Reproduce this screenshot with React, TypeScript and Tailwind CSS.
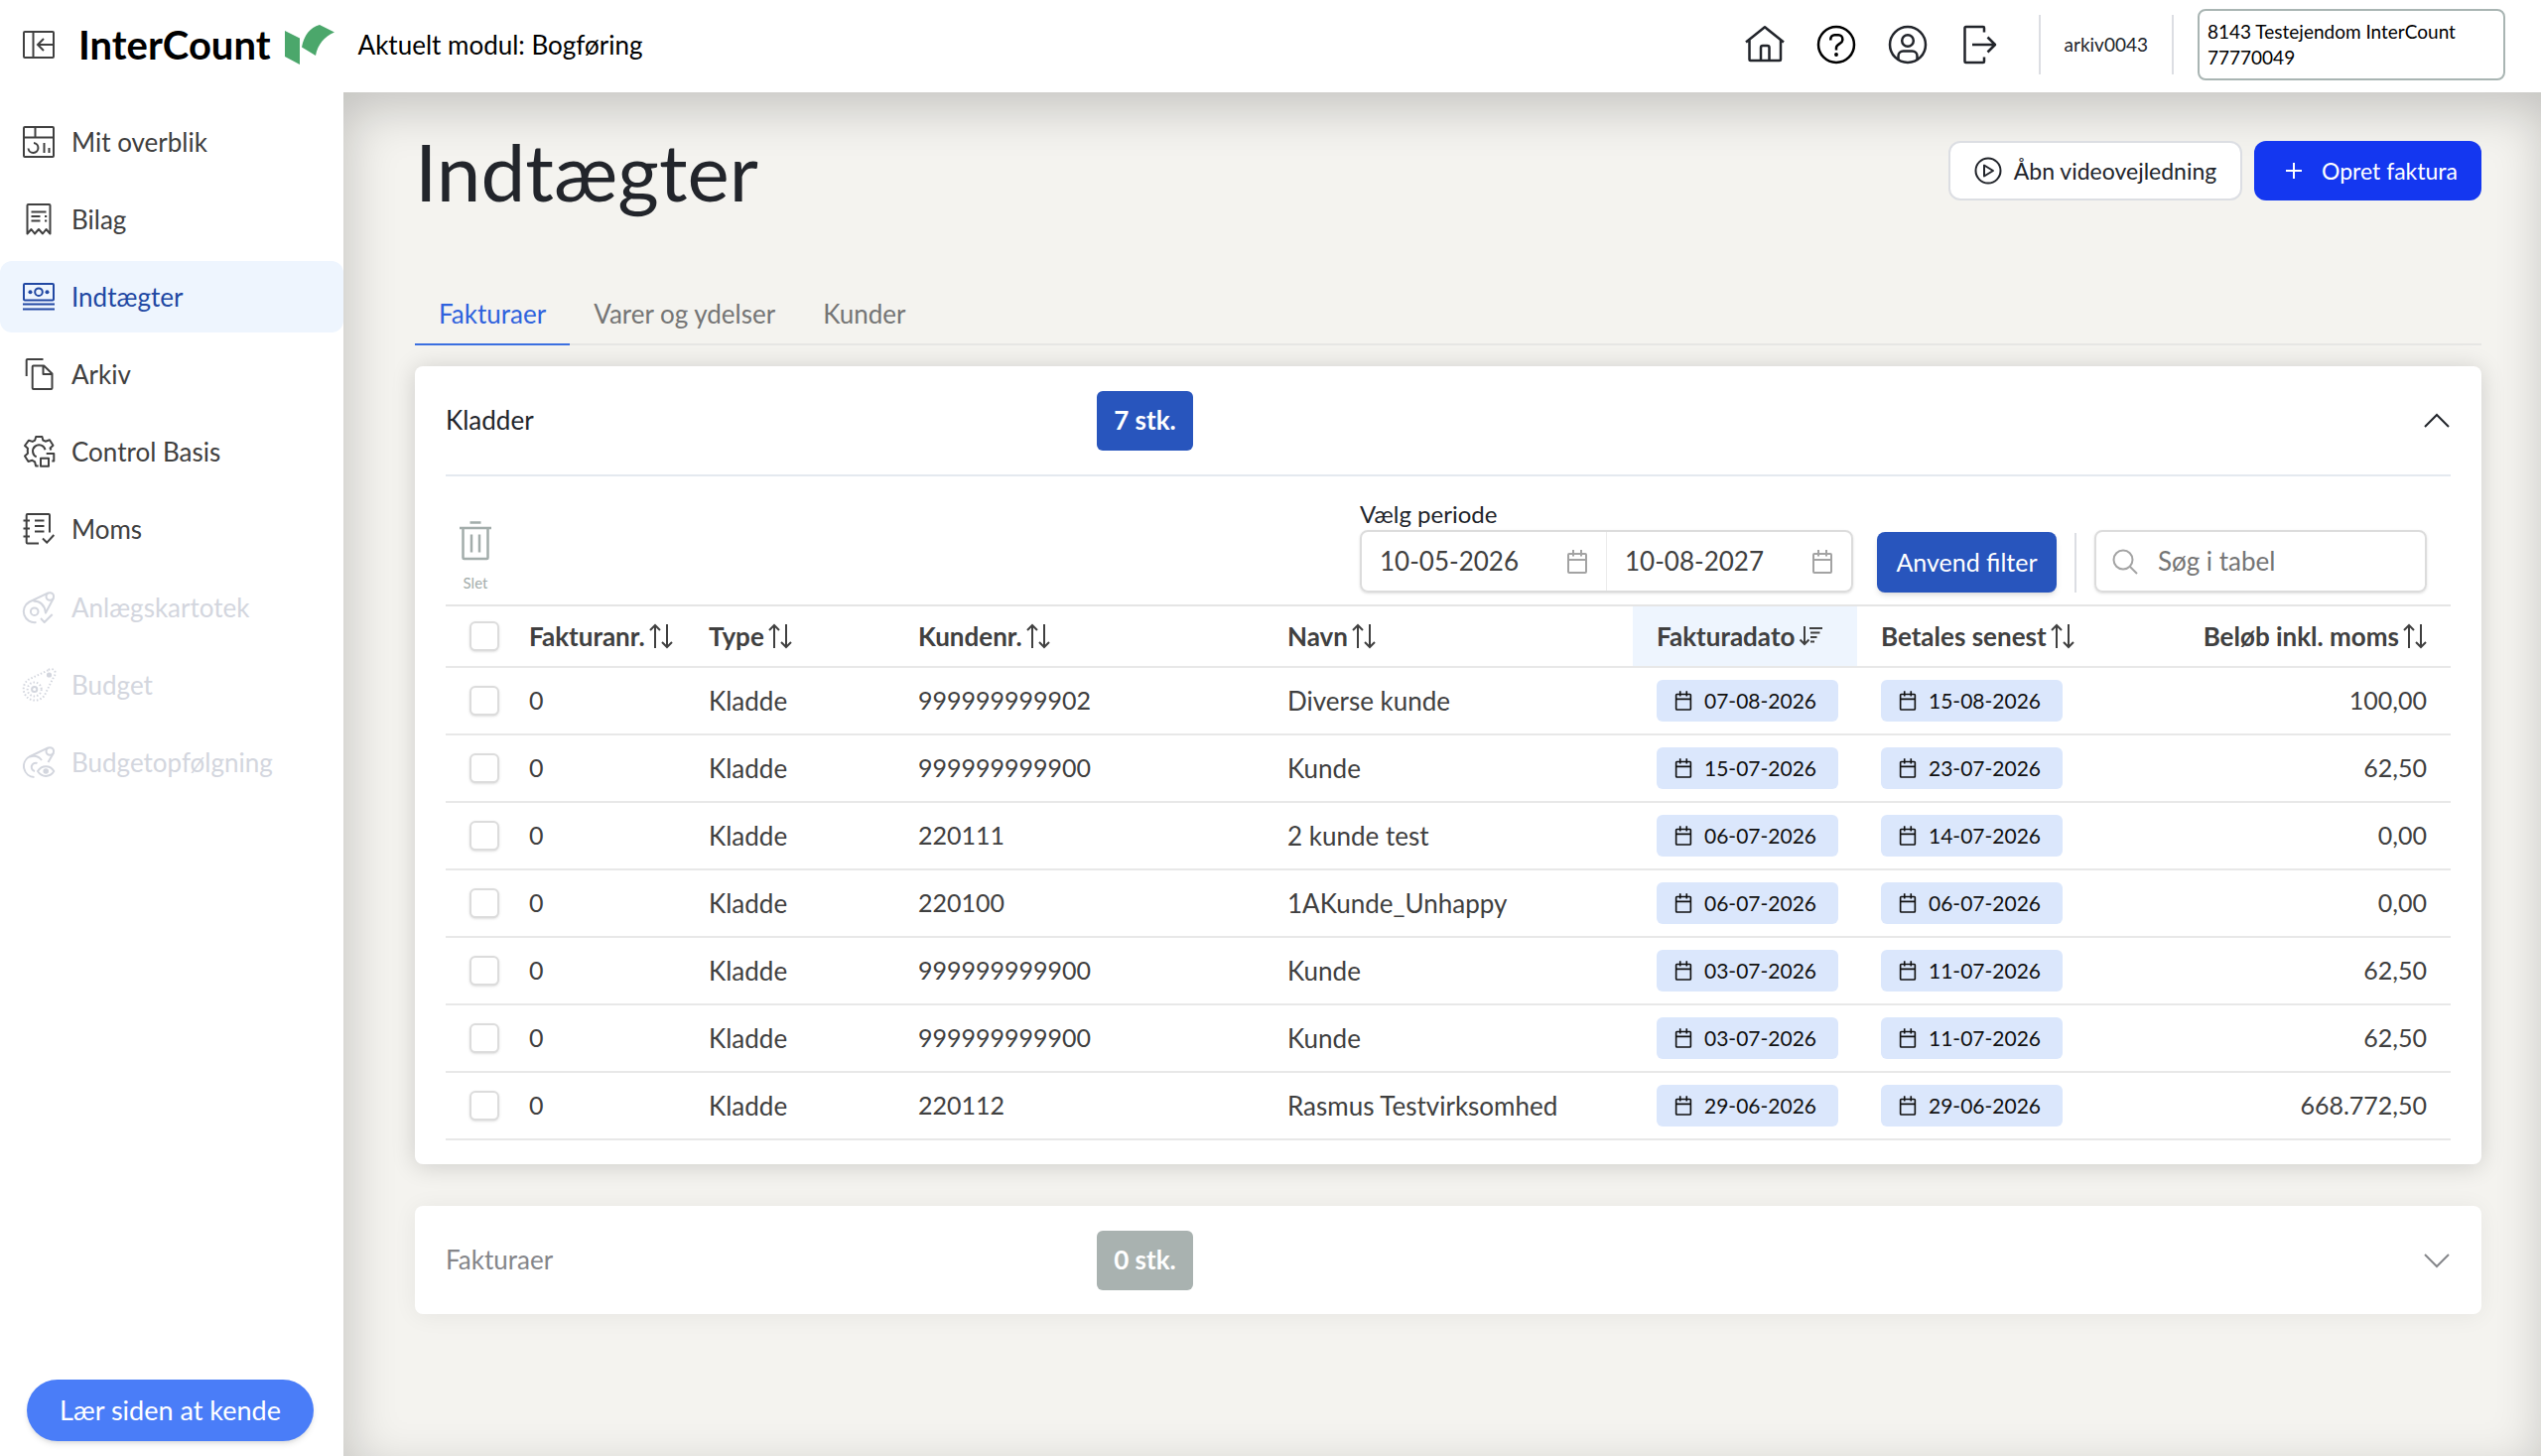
import type { ReactNode } from "react";
import clsx from "clsx";

interface NavItem {
  label: string;
  icon: ReactNode;
  active?: boolean;
  disabled?: boolean;
}

interface InvoiceDraft {
  id: number;
  invoiceNo: string;
  type: string;
  customerNo: string;
  name: string;
  invoiceDate: string;
  dueDate: string;
  amount: string;
}

const MAIN_NAV: NavItem[] = [
  {
    label: "Mit overblik",
    icon: (
      <>
        <rect x="1" y="1" width="30" height="30" rx="1" />
        <path d="M1 11.5h30M12.5 1v10.5M11 17a5 5 0 1 1-5.5 5.5M21.5 17v10M26.5 22v5" />
      </>
    ),
  },
  {
    label: "Bilag",
    icon: (
      <>
        <path d="M4.5 30.5V2a1 1 0 0 1 1-1h21a1 1 0 0 1 1 1v28.5l-4-4.5-3.5 4.5-4-4.5-4 4.5-3.5-4.5z" />
        <path d="M8.5 8.5h15M8.5 13h9M22 13h2.2M8.5 17.5h9M22 17.5h2.2" />
      </>
    ),
  },
  {
    label: "Indtægter",
    active: true,
    icon: (
      <>
        <rect x="1" y="3" width="30" height="16.5" rx="1" />
        <circle cx="16" cy="11.2" r="3.8" />
        <circle cx="7.5" cy="11.2" r="2" fill="currentColor" stroke="none" />
        <circle cx="24.5" cy="11.2" r="2" fill="currentColor" stroke="none" />
        <path d="M0 23.5h32M0 28.5h32" />
      </>
    ),
  },
  {
    label: "Arkiv",
    icon: (
      <path d="M3.7 18V2a1 1 0 0 1 1-1h15.8M10.7 7.5h10.5l8.3 8V30a1 1 0 0 1-1 1H10.7a1 1 0 0 1-1-1V8.500a1 1 0 0 1 1-1zM20.5 7.5v8.5h9" />
    ),
  },
  {
    label: "Control Basis",
    icon: (
      <path d="M28.5 14.5l-1-2 3-2.800-3.5-5.5-4.3 1.5-2.4-1.2L19.4 1h-6.2l-1 3.6-2.4 1.3L6 4.7 2 10l3 2.8c-.4 2-.4 3 0 5L2 20.5 5.5 26l4-1.2 2.6 1.6 1 4.1h2.6M13.7 21.300a6.3 6.3 0 1 1 8.8-7M23.700 18h7.6v7.5h-2M18 22.700h8v8h-8z" />
    ),
  },
  {
    label: "Moms",
    icon: (
      <path d="M16 30.5H4.7a1 1 0 0 1-1-1V2a1 1 0 0 1 1-1H26a1 1 0 0 1 1 1v17.5M.5 7.5H7M.5 15.5H7M.5 23.5H7M12 7.5h9.5M12 13h9.5M12 18.5h9.5M20 25.5l4.3 4.2 7-7.7" />
    ),
  },
];

const LOCKED_NAV: NavItem[] = [
  {
    label: "Anlægskartotek",
    disabled: true,
    icon: (
      <>
        <circle cx="27.3" cy="5" r="3.8" />
        <circle cx="11.7" cy="20.2" r="3.8" />
        <path d="M25.5 1.3L6.5 10.5a11 11 0 0 0 7 20.5M31 6.5l-8 15C22 14 18 9.5 10.5 9.5M18 27l3.7 4 8-8" />
      </>
    ),
  },
  {
    label: "Budget",
    disabled: true,
    icon: (
      <>
        <path
          d="M25.5 1.300L5.5 10.800a11.500 11.500 0 1 0 17 14.500l9-18a4 4 0 0 0-6-6z"
          strokeDasharray="1.5 2"
        />
        <circle cx="11.7" cy="20.5" r="7" strokeDasharray="1.5 2" />
        <circle cx="11.7" cy="20.5" r="2.6" />
        <circle cx="26.5" cy="6" r="1.6" fill="currentColor" />
      </>
    ),
  },
  {
    label: "Budgetopfølgning",
    disabled: true,
    icon: (
      <>
        <circle cx="27.3" cy="5" r="3.8" />
        <path d="M25.5 1.3L6.5 10.5a11 11 0 0 0 5 20.5M31 6.5l-5.5 9.5M7 10.5c5-1.5 9-.5 12 3.5M12 25a4.2 4.2 0 1 1 2.5-8" />
        <path d="M15 25c4-6.5 12.5-6.5 16.3 0-3.8 6.5-12.3 6.5-16.3 0z" />
        <circle cx="23.2" cy="25" r="1.8" fill="currentColor" />
      </>
    ),
  },
];

const TABS = ["Fakturaer", "Varer og ydelser", "Kunder"];

const DRAFTS: InvoiceDraft[] = [
  { id: 1, invoiceNo: "0", type: "Kladde", customerNo: "999999999902", name: "Diverse kunde", invoiceDate: "07-08-2026", dueDate: "15-08-2026", amount: "100,00" },
  { id: 2, invoiceNo: "0", type: "Kladde", customerNo: "999999999900", name: "Kunde", invoiceDate: "15-07-2026", dueDate: "23-07-2026", amount: "62,50" },
  { id: 3, invoiceNo: "0", type: "Kladde", customerNo: "220111", name: "2 kunde test", invoiceDate: "06-07-2026", dueDate: "14-07-2026", amount: "0,00" },
  { id: 4, invoiceNo: "0", type: "Kladde", customerNo: "220100", name: "1AKunde_Unhappy", invoiceDate: "06-07-2026", dueDate: "06-07-2026", amount: "0,00" },
  { id: 5, invoiceNo: "0", type: "Kladde", customerNo: "999999999900", name: "Kunde", invoiceDate: "03-07-2026", dueDate: "11-07-2026", amount: "62,50" },
  { id: 6, invoiceNo: "0", type: "Kladde", customerNo: "999999999900", name: "Kunde", invoiceDate: "03-07-2026", dueDate: "11-07-2026", amount: "62,50" },
  { id: 7, invoiceNo: "0", type: "Kladde", customerNo: "220112", name: "Rasmus Testvirksomhed", invoiceDate: "29-06-2026", dueDate: "29-06-2026", amount: "668.772,50" },
];

const CHECKBOX =
  "block size-[30px] appearance-none rounded-md border-2 border-[#dcdcdc] bg-white shadow-sm checked:border-[#2855bd] checked:bg-[#2855bd]";

function CalendarIcon({ className }: { className?: string }) {
  return (
    <svg viewBox="0 0 22 24" className={className} fill="none" stroke="currentColor" strokeWidth="2" aria-hidden="true">
      <rect x="2" y="4" width="18" height="19" rx="1" />
      <path d="M2 10h18M7 0v6.5M15 0v6.5" />
    </svg>
  );
}

function SortIcon({ descending }: { descending?: boolean }) {
  return (
    <svg viewBox="0 0 24 26" className="h-[26px] w-6 shrink-0" fill="none" stroke="currentColor" strokeWidth="2" aria-hidden="true">
      {descending ? (
        <path d="M6 3v18M1.5 16.5L6 21l4.5-4.5M11 5h13M12 9.5h9.5M12 14h6.5M12 18.5h4" />
      ) : (
        <path d="M6 25V2M1 7l5-5 5 5M18 1v23M13 19l5 5 5-5" />
      )}
    </svg>
  );
}

function Chevron({ up }: { up?: boolean }) {
  return (
    <svg viewBox="0 0 28 16" className="h-4 w-7" fill="none" stroke="currentColor" strokeWidth="2" aria-hidden="true">
      <path d={up ? "M2 14L14 2l12 12" : "M2 2l12 12L26 2"} />
    </svg>
  );
}

function HeaderIconButton({ label, children }: { label: string; children: ReactNode }) {
  return (
    <button type="button" aria-label={label} className="text-[#22252b]">
      <svg viewBox="0 0 40 40" className="size-10" fill="none" stroke="currentColor" strokeWidth="2.5" strokeLinejoin="round">
        {children}
      </svg>
    </button>
  );
}

function Header() {
  return (
    <header className="flex h-[93px] items-center bg-white pr-9 pb-[3px] pl-[23px]">
      <button type="button" aria-label="Skjul menu" className="mr-6 text-[#404040]">
        <svg viewBox="0 0 32 32" className="size-8" fill="none" stroke="currentColor" strokeWidth="2" aria-hidden="true">
          <rect x="1" y="3" width="30" height="26" rx="1" />
          <path d="M10.5 3v26M31 16H15M21 10l-6 6 6 6" />
        </svg>
      </button>
      <a href="#" className="flex items-center gap-[14px] text-[40px] leading-none font-bold text-black">
        InterCount
        <svg viewBox="0 0 50 40" className="h-10 w-[50px]" fill="#4ba76b" aria-hidden="true">
          <path d="M0 6l15 7.5V40L0 32z" />
          <path d="M17 22.5C19.5 10 25 3 35 0l15 7.5C39.5 12 33 20 31 31z" />
        </svg>
      </a>
      <p className="ml-6 text-[26px] text-black">Aktuelt modul: Bogføring</p>

      <div className="ml-auto flex items-center">
        <div className="flex gap-8">
          <HeaderIconButton label="Forside">
            <path d="M1 17.5L20 2.3l19 15.2M4.5 14.5V35a1 1 0 0 0 1 1h29.5a1 1 0 0 0 1-1V14.5M16 36V23a2 2 0 0 1 2-2h4.5a2 2 0 0 1 2 2v13" />
          </HeaderIconButton>
          <HeaderIconButton label="Hjælp">
            <g className="stroke-black">
              <circle cx="20" cy="20" r="18" />
              <path d="M14.3 15.5v-1.3a4 4 0 0 1 4-4h4a4 4 0 0 1 4 4v1.3c0 3.5-6.3 3.8-6.3 7.5v2.5" />
              <circle cx="20" cy="30" r="1.2" fill="black" strokeWidth="1.5" />
            </g>
          </HeaderIconButton>
          <HeaderIconButton label="Profil">
            <circle cx="20" cy="20" r="18" />
            <circle cx="20" cy="16" r="5.8" />
            <path d="M10.5 35v-3.5a5 5 0 0 1 5-5h9a5 5 0 0 1 5 5V35" />
          </HeaderIconButton>
          <HeaderIconButton label="Log ud">
            <path d="M25 7.5V3a1 1 0 0 0-1-1H6.5a1 1 0 0 0-1 1v34a1 1 0 0 0 1 1H24a1 1 0 0 0 1-1v-4.5M13 20h23M28.5 12.5L36 20l-7.5 7.5" />
          </HeaderIconButton>
        </div>
        <span className="ml-10 flex h-[60px] items-center border-x-2 border-[#dcdee3] px-6 text-[19px] text-[#22252b]">
          arkiv0043
        </span>
        <button
          type="button"
          className="ml-6 h-[72px] w-[310px] rounded-lg border-2 border-[#a9b5b3] px-2 text-left text-[19px] leading-[26px] text-black"
        >
          8143 Testejendom InterCount
          <br />
          77770049
        </button>
      </div>
    </header>
  );
}

function NavList({ items }: { items: NavItem[] }) {
  return (
    <ul className="flex flex-col gap-[6px]">
      {items.map((item) => (
        <li key={item.label}>
          <a
            href="#"
            aria-disabled={item.disabled}
            aria-current={item.active ? "page" : undefined}
            className={clsx(
              "flex h-[72px] items-center gap-[17px] rounded-xl pl-[23px] text-[26px]",
              item.active && "bg-[#eef5fe] text-[#2148a3]",
              item.disabled && "text-[#d3d6de]",
              !item.active && !item.disabled && "text-[#404040]"
            )}
          >
            <svg
              viewBox="0 0 32 32"
              className="size-8 overflow-visible"
              fill="none"
              stroke="currentColor"
              strokeWidth="2"
              strokeLinejoin="round"
              aria-hidden="true"
            >
              {item.icon}
            </svg>
            {item.label}
          </a>
        </li>
      ))}
    </ul>
  );
}

function Sidebar() {
  return (
    <aside className="flex w-[346px] shrink-0 flex-col bg-white pt-[14px] pb-[15px]">
      <nav className="flex flex-col gap-[7px]">
        <NavList items={MAIN_NAV} />
        <NavList items={LOCKED_NAV} />
      </nav>
      <button
        type="button"
        className="mx-[27px] mt-auto h-[62px] w-[289px] rounded-full bg-[#4a7df8] text-[27px] text-white shadow-md"
      >
        Lær siden at kende
      </button>
    </aside>
  );
}

function DateField({ id, label, value }: { id: string; label: string; value: string }) {
  return (
    <div className="flex flex-1 items-center px-[18px]">
      <input
        id={id}
        aria-label={label}
        defaultValue={value}
        className="w-full min-w-0 bg-transparent text-[26px] text-[#404040] outline-none"
      />
      <CalendarIcon className="h-6 w-[22px] shrink-0 text-[#a3a3a3]" />
    </div>
  );
}

function Toolbar() {
  return (
    <div className="flex h-[131px] items-end justify-between border-b-2 border-[#e5e5e5] px-3 pb-3">
      <button type="button" disabled className="flex w-9 flex-col items-center gap-3 text-[15px] leading-5 text-[#a3adab]">
        <svg viewBox="0 0 32 40" className="h-10 w-8" fill="none" stroke="currentColor" strokeWidth="2.5" aria-hidden="true">
          <path d="M10.5 1.5h11M0 7h32M3.5 7v30a1 1 0 0 0 1 1h23a1 1 0 0 0 1-1V7M12 13.5v18M20 13.5v18" />
        </svg>
        Slet
      </button>

      <div className="flex items-end pr-3">
        <div>
          <p className="text-[24px] leading-8 text-[#22252b]">Vælg periode</p>
          <div className="flex h-[63px] w-[497px] divide-x divide-[#ececec] rounded-lg border-2 border-[#dcdcdc] shadow-sm">
            <DateField id="period-from" label="Fra dato" value="10-05-2026" />
            <DateField id="period-to" label="Til dato" value="10-08-2027" />
          </div>
        </div>
        <button type="button" className="ml-6 h-[61px] w-[181px] rounded-lg bg-[#2855bd] text-[25px] text-white shadow-md">
          Anvend filter
        </button>
        <div className="mx-[18px] h-[60px] w-[2px] bg-[#dcdee3]" />
        <label className="flex h-[63px] w-[335px] items-center gap-5 rounded-lg border-2 border-[#dcdcdc] pl-4 shadow-sm">
          <svg viewBox="0 0 26 26" className="size-[26px] shrink-0 text-[#a3a3a3]" fill="none" stroke="currentColor" strokeWidth="2" aria-hidden="true">
            <circle cx="11" cy="11" r="9.5" />
            <path d="M18 18l7 7" />
          </svg>
          <input
            type="text"
            aria-label="Søg i tabel"
            placeholder="Søg i tabel"
            className="w-full min-w-0 text-[26px] outline-none placeholder:text-[#757575]"
          />
        </label>
      </div>
    </div>
  );
}

function ColumnHeader({ label, sorted, alignRight }: { label: string; sorted?: boolean; alignRight?: boolean }) {
  return (
    <th scope="col" aria-sort={sorted ? "descending" : undefined} className={clsx("px-6", sorted && "bg-[#eef5fe]")}>
      <button
        type="button"
        className={clsx("flex w-full items-center gap-1 font-bold whitespace-nowrap", alignRight && "justify-end")}
      >
        {label}
        <SortIcon descending={sorted} />
      </button>
    </th>
  );
}

function DatePill({ date }: { date: string }) {
  return (
    <span className="flex h-[42px] w-[183px] items-center gap-3 rounded-md bg-[#dbe7fc] pl-[18px] text-[21px] text-[#111111]">
      <CalendarIcon className="h-5 w-[18px]" />
      {date}
    </span>
  );
}

function DraftTable() {
  return (
    <table className="w-full table-fixed text-left text-[26px] text-[#404040]">
      <colgroup>
        <col className="w-[60px]" />
        <col className="w-[181px]" />
        <col className="w-[211px]" />
        <col />
        <col />
        <col className="w-[226px]" />
        <col className="w-[226px]" />
        <col />
      </colgroup>
      <thead>
        <tr className="h-[61px] border-b-2 border-[#e8e8e8]">
          <th scope="col" className="pl-6">
            <input type="checkbox" aria-label="Vælg alle" className={CHECKBOX} />
          </th>
          <ColumnHeader label="Fakturanr." />
          <ColumnHeader label="Type" />
          <ColumnHeader label="Kundenr." />
          <ColumnHeader label="Navn" />
          <ColumnHeader label="Fakturadato" sorted />
          <ColumnHeader label="Betales senest" />
          <ColumnHeader label="Beløb inkl. moms" alignRight />
        </tr>
      </thead>
      <tbody>
        {DRAFTS.map((draft) => (
          <tr key={draft.id} className="h-[68px] border-b-2 border-[#e8e8e8]">
            <td className="pl-6">
              <input type="checkbox" aria-label={`Vælg kladde ${draft.id}`} className={CHECKBOX} />
            </td>
            <td className="px-6 text-[25px]">{draft.invoiceNo}</td>
            <td className="px-6">{draft.type}</td>
            <td className="px-6 text-[25px]">{draft.customerNo}</td>
            <td className="px-6 whitespace-nowrap">{draft.name}</td>
            <td className="pl-6">
              <DatePill date={draft.invoiceDate} />
            </td>
            <td className="pl-6">
              <DatePill date={draft.dueDate} />
            </td>
            <td className="px-6 text-right text-[25px]">{draft.amount}</td>
          </tr>
        ))}
      </tbody>
    </table>
  );
}

interface SectionProps {
  title: string;
  count: number;
  open?: boolean;
  children?: ReactNode;
}

function Section({ title, count, open, children }: SectionProps) {
  return (
    <section
      className={clsx(
        "rounded-lg bg-white px-[31px]",
        open ? "pb-6 shadow-[0_2px_24px_rgba(0,0,0,0.16)]" : "shadow-[0_2px_24px_rgba(0,0,0,0.06)]"
      )}
    >
      <button
        type="button"
        aria-expanded={!!open}
        className={clsx(
          "grid w-full grid-cols-[656px_1fr_auto] items-center text-left text-[26px]",
          open ? "h-[111px] border-b-2 border-[#e4e9ef] text-[#22252b]" : "h-[109px] text-[#85868a]"
        )}
      >
        <span>{title}</span>
        <span
          className={clsx(
            "flex h-[60px] w-[97px] items-center justify-center rounded-md font-bold text-white",
            open ? "bg-[#2855bd]" : "bg-[#a9b2b0]"
          )}
        >
          {count} stk.
        </span>
        <Chevron up={open} />
      </button>
      {children}
    </section>
  );
}

export default function App() {
  return (
    <div className="flex min-h-screen flex-col bg-white font-['Lato','Liberation_Sans',sans-serif]">
      <Header />
      <div className="flex flex-1">
        <Sidebar />
        <main className="min-w-0 flex-1 bg-[#f4f3ef] pt-12 pr-[60px] pl-[72px] shadow-[inset_4px_16px_50px_rgba(0,0,0,0.2)]">
          <div className="flex h-[62px] items-center justify-between">
            <h1 className="text-[80px] leading-none text-[#22252b]">Indtægter</h1>
            <div className="flex gap-3 text-[23px]">
              <button
                type="button"
                className="flex h-[60px] w-[296px] items-center justify-center gap-3 rounded-xl border-2 border-[#dcdee3] bg-white text-[#22252b]"
              >
                <svg viewBox="0 0 28 28" className="size-7" fill="none" stroke="currentColor" strokeWidth="2" aria-hidden="true">
                  <circle cx="14" cy="14" r="12.5" />
                  <path d="M10 8.5v11l9-5.5z" strokeLinejoin="round" />
                </svg>
                Åbn videovejledning
              </button>
              <button
                type="button"
                className="flex h-[60px] w-[229px] items-center gap-5 rounded-xl bg-[#1437f0] pl-8 text-white"
              >
                <svg viewBox="0 0 16 16" className="size-4" stroke="currentColor" strokeWidth="2" aria-hidden="true">
                  <path d="M8 0v16M0 8h16" />
                </svg>
                Opret faktura
              </button>
            </div>
          </div>

          <div role="tablist" className="mt-[83px] flex border-b-2 border-[#e6e6e4] text-[26px]">
            {TABS.map((tab, idx) => (
              <button
                key={tab}
                type="button"
                role="tab"
                aria-selected={idx === 0}
                className={clsx(
                  "-mb-[2px] h-[62px] border-b-2 px-6",
                  idx === 0 ? "border-[#3b6fe0] text-[#2f62dd]" : "border-transparent text-[#757575]"
                )}
              >
                {tab}
              </button>
            ))}
          </div>

          <div className="mt-[21px] flex flex-col gap-[42px]">
            <Section title="Kladder" count={7} open>
              <Toolbar />
              <DraftTable />
            </Section>
            <Section title="Fakturaer" count={0} />
          </div>
        </main>
      </div>
    </div>
  );
}
